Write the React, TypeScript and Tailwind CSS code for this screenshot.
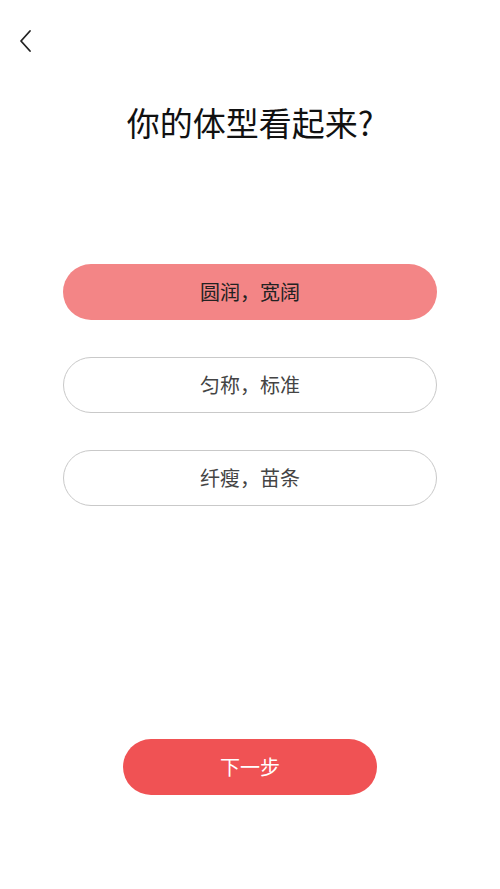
import { useState } from 'react';

const options = ['圆润，宽阔', '匀称，标准', '纤瘦，苗条'];

export default function App() {
  const [picked, setPicked] = useState(0);

  return (
    <div
      className="w-[500px] h-[889px] bg-white flex flex-col"
      style={{ fontFamily: '"Noto Sans CJK SC", "Noto Sans", sans-serif' }}
    >
      {/* Header */}
      <div className="h-[80px] flex items-start pt-[29px] pl-[16px]">
        <button className="w-[18px] h-[24px] flex items-center justify-center">
          <svg width="14" height="24" viewBox="0 0 14 24" fill="none">
            <path d="M12 2 L3 12 L12 22" stroke="#222" strokeWidth="1.8" strokeLinecap="round" strokeLinejoin="round" />
          </svg>
        </button>
      </div>

      <h1 className="text-center text-[33px] leading-[44px] font-normal text-[#111] mt-[20px]">你的体型看起来?</h1>

      {/* Options */}
      <div className="flex flex-col items-center gap-[37px] mt-[120px]">
        {options.map((o, i) => (
          <button
            key={o}
            onClick={() => setPicked(i)}
            className={
              i === picked
                ? 'w-[374px] h-[56px] rounded-full bg-[#f38586] text-[20px] text-[#222]'
                : 'w-[374px] h-[56px] rounded-full border border-[#c9c9c9] bg-white text-[20px] text-[#444]'
            }
          >
            {o}
          </button>
        ))}
      </div>

      <div className="flex-1" />

      <div className="flex justify-center pb-[94px]">
        <button className="w-[254px] h-[56px] rounded-full bg-[#f05254] text-white text-[20px]">下一步</button>
      </div>
    </div>
  );
}
